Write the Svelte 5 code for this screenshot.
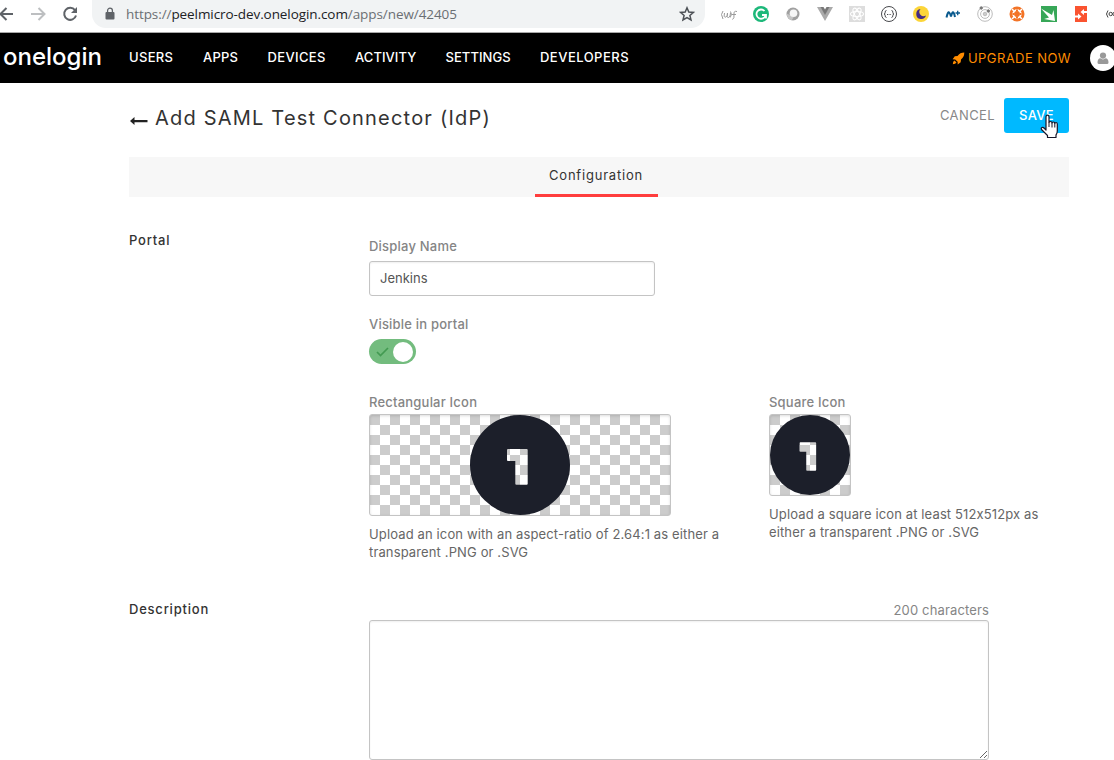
<script>
  const nav = [
    { label: 'USERS', w: 44, ls: 0.32 },
    { label: 'APPS', w: 35, ls: 0.22 },
    { label: 'DEVICES', w: 58, ls: 0.35 },
    { label: 'ACTIVITY', w: 61, ls: 0.06 },
    { label: 'SETTINGS', w: 65, ls: 0.06 },
    { label: 'DEVELOPERS', w: 89, ls: 0.48 }
  ];
  let displayName = $state('Jenkins');
  let description = $state('');
</script>

{#snippet badge()}
  <svg class="badge" viewBox="0 0 100 100">
    <path fill="#1c1f2a" fill-rule="evenodd" d="M50 0a50 50 0 1 1 0 100a50 50 0 1 1 0-100ZM38 34Q37 34 37 35V45Q37 46 38 46H45.3V68.7Q45.3 69.7 46.3 69.7H56.7Q57.7 69.7 57.7 68.7V35Q57.7 34 56.7 34Z" />
  </svg>
{/snippet}

<div class="page">
  <div class="chrome">
    <svg class="ctl" width="92" height="28" viewBox="0 0 92 28" fill="none" stroke-width="2">
      <path stroke="#5f6368" d="M13 14H1M6.500 8L.5 14l6 6" />
      <path stroke="#bdbfc1" d="M31 14h13M38.500 8l6 6-6 6" />
      <path stroke="#5f6368" d="M75 10.200A6 6 0 1 0 76 15.500" />
      <path fill="#5f6368" d="M77 7v6h-6z" />
    </svg>
    <div class="address">
      <svg width="10" height="14" viewBox="0 0 10 14"><path fill="#5f6368" d="M1.500 5H8.500Q9.500 5 9.500 6V11.500Q9.500 12.500 8.500 12.500H1.500Q.5 12.500 .5 11.500V6Q.5 5 1.500 5" /><path d="M2.600 6V3.600a2.400 2.400 0 0 1 4.800 0V6" fill="none" stroke="#5f6368" stroke-width="1.300" /></svg>
      <span class="url"><i>https://</i>peelmicro-dev.onelogin.com<i>/apps/new/42405</i></span>
      <svg class="star" width="16" height="16" viewBox="0 0 16 16"><path fill="none" stroke="#4d5156" stroke-width="1.500" d="M8 1.800l1.800 4.200 4.600.4-3.500 3 1.100 4.500L8 11.500l-4 2.400 1.100-4.500-3.500-3 4.600-.4z" /></svg>
    </div>
    <div class="exts">
      <svg viewBox="0 0 24 24" fill="none" stroke="#9a9a9a"><path d="M6 9Q3 12 6 17M7.500 11q-1 5 1.300 4t1.700-4q-1 5 1 4.500t2-4.500M13.500 9.500q2 3-.3 6M15.500 17.500q2-1 1.500-5t3-3M14.500 12.500h4.500" /></svg>
      <svg viewBox="0 0 24 24"><circle cx="12" cy="12" r="8" fill="#1db87a" /><path d="M15.500 9A4.600 4.600 0 1 0 16.500 13.500M13 13h4v3.500" fill="none" stroke="#fff" stroke-width="1.800" /></svg>
      <svg viewBox="0 0 24 24"><circle cx="12" cy="12" r="6.500" fill="#a0a0a0" /><path d="M5.600 11.500q2 1.500 4 1l3 3-2 2.800q-4.500-1-5-6.800" fill="#c4c4c4" /><circle cx="12.500" cy="11.200" r="3.800" fill="#f6f6f6" /></svg>
      <svg viewBox="0 0 24 24"><path fill="#aaa" d="M4 5h4l4 7 4-7h4l-8 14z" /><path fill="#777" d="M7.500 5h3l1.500 2.500L13.500 5h3L12 13z" /></svg>
      <svg viewBox="0 0 24 24"><path fill="#ddd" d="M4 4h16v16H4z" /><g fill="none" stroke="#fff" stroke-width="1.100"><ellipse cx="12" cy="12" rx="6.500" ry="2.500" /><ellipse cx="12" cy="12" rx="6.500" ry="2.500" transform="rotate(60 12 12)" /><ellipse cx="12" cy="12" rx="6.500" ry="2.500" transform="rotate(120 12 12)" /></g></svg>
      <svg viewBox="0 0 24 24" fill="none" stroke="#48494d"><circle cx="12" cy="12" r="7.500" /><path d="M9.500 8.500q-1.500 0-1.300 1.700T7 12q1.400.3 1.200 1.800t1.300 1.700M14.500 8.500q1.500 0 1.300 1.700T17 12q-1.400.3-1.200 1.800t-1.300 1.700M10 12.500h1M11.700 12.500h.8M13.300 12.500h.8" /></svg>
      <svg viewBox="0 0 24 24"><circle cx="12" cy="12" r="8" fill="#fcd538" /><path fill="#452b83" d="M11.500 7A5 5 0 1 0 17 13.500A4.300 4.300 0 0 1 11.500 7" /></svg>
      <svg viewBox="0 0 24 24" fill="none" stroke="#0a5a8e"><path stroke-width="2" d="M5.500 15.500Q7 9 8.200 10.500T10 14.500Q11.500 9 12.500 10.500T14 15" /><path stroke-width="1.300" d="M14.500 11h4.500M16.700 8.800v4.500" /></svg>
      <svg viewBox="0 0 24 24" fill="none" stroke="#bcbcbc"><circle cx="12" cy="12" r="7.300" /><circle cx="12" cy="12" r="4.400" /><circle cx="12" cy="12" r="1.800" fill="#ccc" /><circle cx="8.200" cy="6" r="1.200" fill="#777" stroke="#777" /><circle cx="15.300" cy="9" r="1.200" fill="#777" stroke="#777" /></svg>
      <svg viewBox="0 0 24 24"><circle cx="12" cy="12" r="7.500" fill="#f37427" /><circle cx="12" cy="12" r="3.800" fill="none" stroke="#fff" stroke-width="1.800" /><path d="M7 7l2.200 2.200M17 7l-2.200 2.200M7 17l2.200-2.200M17 17l-2.200-2.200" stroke="#fff" stroke-width="1.500" /><path d="M12 7.500v2M12 14.500v2M7.500 12h2M14.500 12h2" stroke="#f37427" stroke-width="2" /></svg>
      <svg viewBox="0 0 24 24"><path fill="#37a758" d="M4 4h16v16H4z" /><path fill="#fff" d="M4 6.500l11 6.500 1.500-5 1.500 11-11-2 5-1.500z" /></svg>
      <svg viewBox="0 0 24 24"><path fill="#fa5330" d="M6 4h12v16H6z" /><path d="M19 10h-5M6 14.500h4" fill="none" stroke="#fff" stroke-width="1.800" /><path fill="#fff" d="M15 7v6l-3.500-3zM9 11.500v6l3.500-3z" /></svg>
      <svg viewBox="0 0 24 24" fill="none" stroke="#444"><path d="M7 8.500Q4 12 7 15.500" /><circle cx="9.700" cy="12" r="1.700" /><circle cx="13.500" cy="12" r="1.700" /></svg>
    </div>
  </div>

  <header>
    <span class="logo">onelogin</span>
    <nav>
      {#each nav as n}<a style:width="{n.w}px" style:letter-spacing="{n.ls}px">{n.label}</a>{/each}
    </nav>
    <div class="upgrade">
      <svg width="13" height="13" viewBox="0 0 13 13" fill="#ff8c00"><path d="M12.300.6Q8 .6 5.500 4L2.800 4.300.6 7.300l2.600.1 2.400 2.400.1 2.600 3-2.200L9 7.500Q12.300 5 12.300.6M2.500 8.500Q.8 9.300.8 12.200 3.600 12.200 4.500 10.500z" /></svg>
      <span>UPGRADE NOW</span>
    </div>
    <div class="avatar"><svg width="12" height="13" viewBox="0 0 12 13" fill="#999"><circle cx="6" cy="3.600" r="3.100" /><path d="M3.500 6.300Q6 8.500 8.500 6.300 11.500 6.500 11.500 10.500 11.500 12 10 12H2Q.5 12 .5 10.500.5 6.500 3.500 6.300" /></svg></div>
  </header>

  <main>
    <div class="titlebar">
      <svg class="back" width="18" height="10" viewBox="0 0 18 10"><path fill="#222" d="M0 5l4.500-4v3h13v2.200h-13V9z" /></svg>
      <h1>Add SAML Test Connector (IdP)</h1>
      <span class="cancel">CANCEL</span>
      <button class="save">SAVE</button>
    </div>
    <div class="tabs"><div class="tab">Configuration</div></div>

    <section class="portal">
      <h2>Portal</h2>
      <div class="fields">
        <label for="name">Display Name</label>
        <input id="name" bind:value={displayName} />
        <div class="label vis">Visible in portal</div>
        <div class="toggle">
          <svg width="13" height="10" viewBox="0 0 13 10"><path d="M1 5l3.500 3.500L12 1" fill="none" stroke="#439a52" stroke-width="1.700" /></svg>
          <span class="knob"></span>
        </div>
        <div class="icons">
          <div class="rect">
            <div class="label">Rectangular Icon</div>
            <div class="checker wide">{@render badge()}</div>
            <p>Upload an icon with an aspect-ratio of 2.64:1 as either a<br />transparent .PNG or .SVG</p>
          </div>
          <div class="square">
            <div class="label">Square Icon</div>
            <div class="checker small">{@render badge()}</div>
            <p>Upload a square icon at least 512x512px as<br />either a transparent .PNG or .SVG</p>
          </div>
        </div>
      </div>
    </section>

    <section class="desc">
      <h2>Description</h2>
      <div class="fields">
        <div class="count">200 characters</div>
        <textarea bind:value={description}></textarea>
      </div>
    </section>
  </main>

  <svg class="cursor" width="20" height="26" viewBox="0 0 20 26"><path fill="#fff" stroke="#161628" stroke-width="1.200" stroke-linejoin="round" d="M6 14V3Q6 1.200 7.500 1.200T9 3v5.500q0-1 1.500-1T12 9q0-1 1.400-1T14.800 9.500q0-1 1.200-1t1.300 1.500V17q0 2.500-1.300 4v2.500H7.500V21.500L1.500 15.500Q.8 14 2 13.500T4.500 14.500L6 16z" /><path d="M9 8.500v4.500M12 9v4.500M14.800 9.500v4" stroke="#161628" /></svg>
</div>

<style>
  :global(body) { margin: 0; overflow: hidden; background: #fff; }
  .page { position: relative; width: 1114px; height: 760px; overflow: hidden; font-family: Inter, sans-serif; font-size: 13px; font-feature-settings: "calt" 0; color: #333; }
  svg { flex: none; display: block; }
  .chrome { display: flex; height: 33px; box-sizing: border-box; border-bottom: 1px solid #a8a8a8; }
  .address { display: flex; flex: none; align-items: center; width: 613px; height: 28px; box-sizing: border-box; padding: 0 10px 0 13px; background: #f1f3f4; border-radius: 0 0 14px 14px; }
  .url { margin-left: 11px; font: 13.500px "Open Sans", sans-serif; letter-spacing: -0.08px; color: #202124; white-space: nowrap; }
  .url i { font-style: normal; color: #6b6f73; }
  .star { margin-left: auto; }
  .exts { display: flex; flex: none; gap: 8px; padding: 2px 0 0 12px; }
  .exts svg { width: 24px; height: 24px; }
  header { display: flex; height: 50px; background: #000; color: #fff; align-items: center; }
  .logo { width: 126px; padding-left: 3px; box-sizing: content-box; font-size: 24px; font-weight: 500; line-height: 48px; height: 50px; }
  nav { display: flex; gap: 30px; line-height: 18px; padding-bottom: 2px; margin-right: auto; }
  nav a { font-weight: 500; white-space: nowrap; }
  nav a:nth-child(n + 3) { margin-left: -0.500px; }
  .upgrade { display: flex; align-items: center; color: #ff8c00; gap: 3px; margin-right: 19px; letter-spacing: 0.420px; }
  .avatar { display: grid; place-items: center; width: 26px; height: 26px; border-radius: 50%; background: #fff; margin-right: -2px; flex: none; }
  main { width: 940px; margin-left: 129px; }
  .titlebar { display: flex; height: 74px; }
  .back { margin: 33px 7px 0 1px; }
  h1 { margin: 22px 0 0; font-size: 20px; line-height: 26px; font-weight: 400; letter-spacing: 1.200px; white-space: nowrap; }
  .cancel { margin: 23px 9px 0 auto; line-height: 18px; letter-spacing: 0.390px; color: #888; }
  .save { margin-top: 15px; width: 65px; height: 35px; padding: 0 0 1px; border: 0; border-radius: 3px; background: #00b9ff; color: #fff; font: 500 13px Inter, sans-serif; letter-spacing: 0.330px; }
  .tabs { display: flex; justify-content: center; height: 40px; background: #f7f7f7; }
  .tab { width: 123px; margin-right: 6px; box-sizing: border-box; border-bottom: 3px solid #ff3d3d; text-align: center; line-height: 37px; letter-spacing: 0.790px; }
  section { display: flex; }
  h2 { width: 240px; margin: 0; font-size: 13px; line-height: 18px; font-weight: 500; letter-spacing: 0.780px; color: #333; }
  .portal { padding-top: 34px; height: 369px; box-sizing: border-box; }
  .portal .fields { padding-top: 6px; }
  label, .label { display: block; line-height: 18px; font-weight: 500; letter-spacing: 0.210px; color: #858585; white-space: nowrap; }
  input { display: block; width: 286px; height: 35px; margin-top: 6px; padding: 0 10px 2px; box-sizing: border-box; border: 1px solid #c4c4c4; border-radius: 3px; box-shadow: inset 0 1px 2px #0001; font: 13px Inter, sans-serif; color: #555; outline: none; }
  .vis { margin-top: 19px; }
  .toggle { display: flex; align-items: center; justify-content: space-between; box-sizing: border-box; width: 47px; height: 25px; margin-top: 6px; padding: 0 3px 0 7px; border-radius: 13px; background: #73bc7e; }
  .knob { width: 20px; height: 20px; border-radius: 50%; background: #fff; }
  .icons { display: flex; margin-top: 29px; }
  .rect { width: 400px; }
  .checker { box-sizing: border-box; margin-top: 3px; border: 1px solid #c4c4c4; border-radius: 3px; background: repeating-conic-gradient(#fff 0 25%, #ccc 0 50%) 0 0 / 20px 20px; box-shadow: inset 0 1px 3px #0002; display: flex; justify-content: center; }
  .wide { width: 302px; height: 102px; }
  .small { width: 82px; height: 82px; }
  .badge { height: 100%; }
  p { margin: 9px 0 0; line-height: 18px; letter-spacing: 0.130px; color: #666; white-space: nowrap; }
  .desc { padding-top: 34px; }
  .desc .fields { width: 620px; padding-top: 1px; }
  .count { text-align: right; line-height: 18px; letter-spacing: 0.140px; color: #858585; }
  textarea { display: block; width: 620px; height: 140px; margin-top: 1px; box-sizing: border-box; border: 1px solid #c4c4c4; border-radius: 3px; box-shadow: inset 0 1px 2px #0001; outline: none; }
  .cursor { position: absolute; left: 1040px; top: 114px; }
</style>
